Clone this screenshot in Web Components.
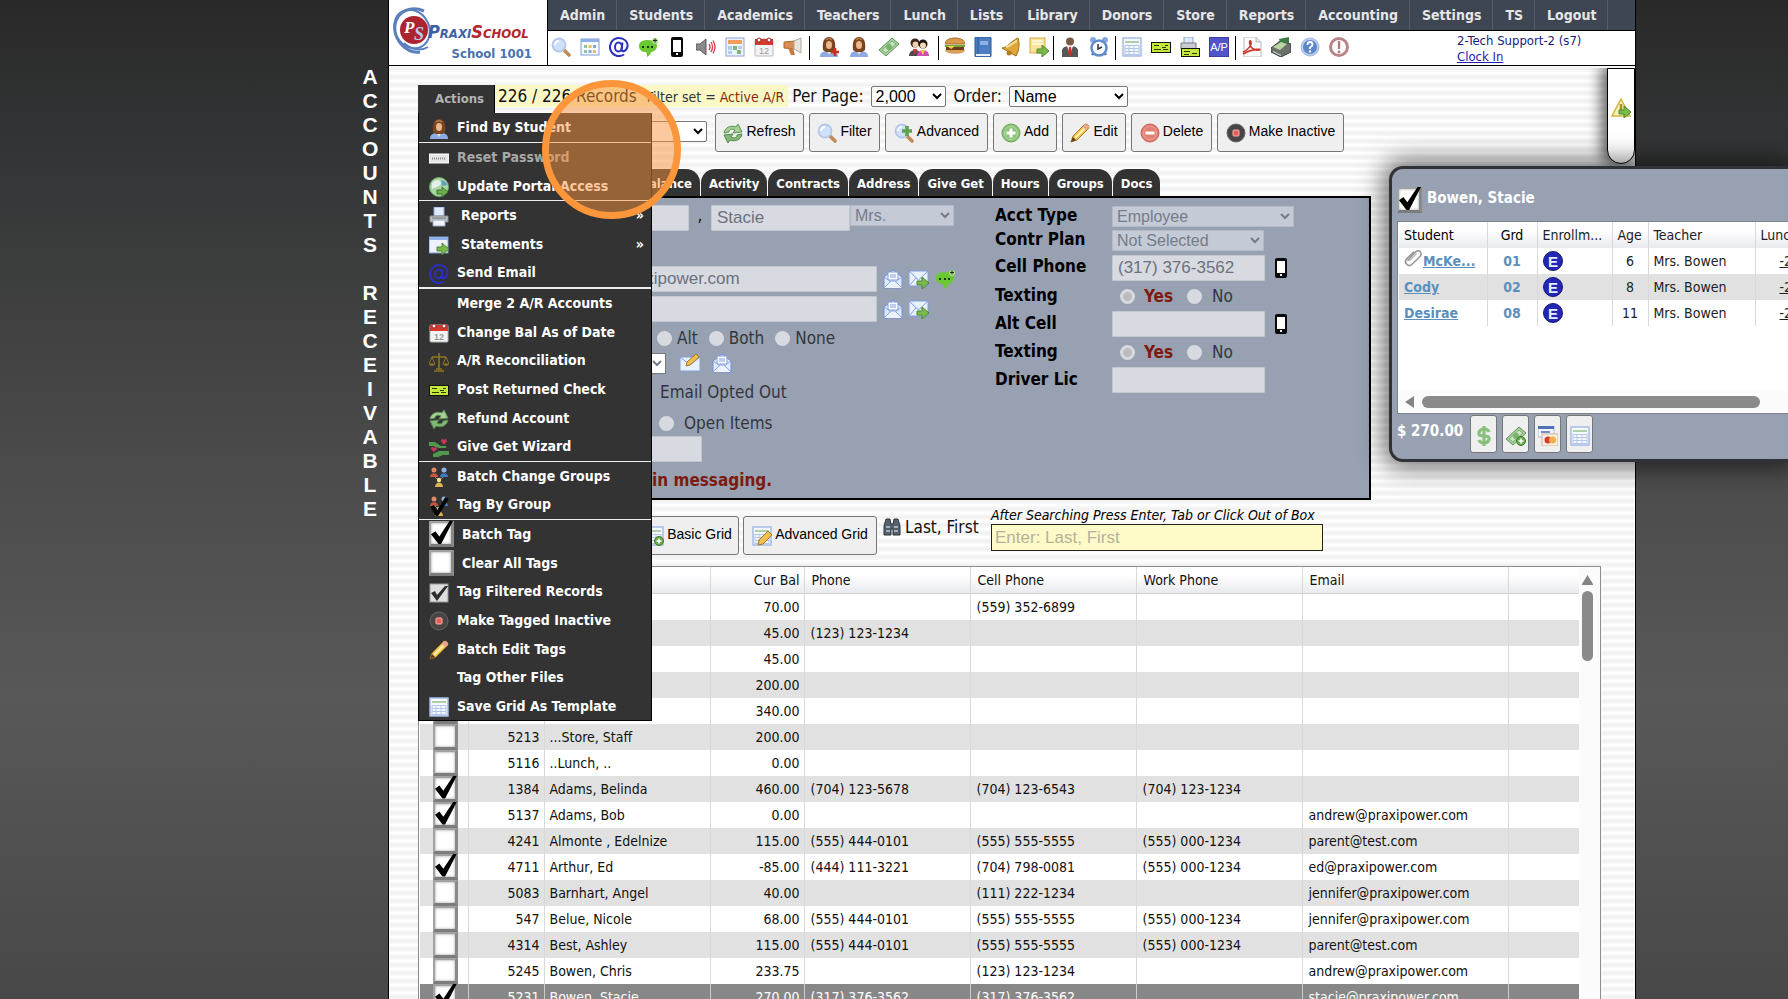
<!DOCTYPE html>
<html lang="en">
<head>
<meta charset="utf-8">
<title>PraxiSchool - Accounts Receivable</title>
<style>
  html, body { margin: 0; height: 100%; overflow: hidden; }
  body { font-family: "DejaVu Sans Condensed", "DejaVu Sans", sans-serif; font-size: 14px; color: #111; }
</style>
</head>
<body>
<praxi-app></praxi-app>
<script>
const PERSON = '<path d="M1 20c0-5 3-6 9-6s9 1 9 6z" fill="#8fabe4"/><path d="M7 13h6l-3 5z" fill="#f3dcc4"/><path d="M4 13C3 5 5 0 10 0s7 5 6 13l-3 2H7z" fill="#7a4421"/><path d="M7 3c2-2 4-2 6 0" stroke="#b47a4a" stroke-width="1.5" fill="none"/><ellipse cx="10" cy="8" rx="3" ry="4" fill="#e9b98d"/>';
const TABLE = '<rect x="1" y="1" width="18" height="18" fill="#f4f8ff" stroke="#a6bce6" stroke-width="1.500"/><path d="M3 5h14" stroke="#9cc08d" stroke-width="1.500"/><path d="M3 8.500h14M3 11.500h14M3 14.500h14M3 17.500h14M7 8v10M12 8v10M17 8v10M3 8v10" stroke="#b4c6e8" fill="none"/>';
const CHECKS = '<rect x="0" y="5" width="20" height="11" fill="#111"/><rect x="1" y="6" width="18" height="9" fill="#c3e83a"/><path d="M3 8.500h5M3 12.500h7M12 12.500h5M11 10.500h4M14 8.500h3" stroke="#2c3a00"/>';
const PENCIL = '<path d="M1 19l2-6L14 2q2-2 4 0t0 4L7 17z" fill="#f2c44d" stroke="#a87820"/><path d="M5 15L16 4" stroke="#fff0b0" stroke-width="2"/><path d="M1 19l2-5 3 3z" fill="#5a3a1a"/><path d="M14 2q2-2 4 0t0 4l-2 1-3-3z" fill="#e8a58f"/>';
const ARROW = '<path d="M8 12h5V8l7 6-7 6v-4H8z" fill="#7cb94c" stroke="#4b8a2a"/>';
const MAIL = '<path d="M1 8l9-7 9 7v11H1z" fill="#dfeafc" stroke="#6f8fd6"/><rect x="5" y="3" width="10" height="8" rx="1" fill="#fff" stroke="#7e9ade"/><path d="M7 6h6M7 8h6" stroke="#7e9ade"/><path d="M1 19l7-7h4l7 7M1 8l7 5M19 8l-7 5" stroke="#8aa6e2" fill="#eef4ff"/>';
const CASH = '<path d="M0 13L13 1l7 6L7 19z" fill="#a9cf9f" stroke="#5f9358"/><path d="M3 13L13 4l4 3L7 16z" fill="#c9e4c0" stroke="#7bb072"/><circle cx="10" cy="10" r="3" fill="#7ab36e"/>';
const RECYCLE = '<path d="M1 10C2 4 8 2 13 4l2-3 4 8-9 1 2-3C8 5 6 7 6 9z" fill="#a4d096" stroke="#5d9254"/><path d="M19 11c-1 6-7 8-12 6l-2 3-4-8 9-1-2 3c4 2 6 0 6-2z" fill="#82b976" stroke="#55884b"/>';
const MAG = '<path d="M13 13l5 5" stroke="#c08b55" stroke-width="3.600" stroke-linecap="round"/><circle cx="8" cy="8" r="6.500" fill="#cfe0f9" stroke="#b5c8ea" stroke-width="1.800"/><path d="M4 8a4 4 0 0 1 4-4" stroke="#fff" stroke-width="1.800" fill="none"/>';
const PHONE = '<rect x="4" y="0" width="12" height="20" rx="2" fill="#0a0a0a"/><rect x="6" y="3" width="8" height="12" fill="#fff"/><rect x="9" y="16" width="2" height="2" fill="#eee"/>';
const CAL = '<rect x="1" y="2" width="18" height="17" rx="1" fill="#f3f3f3" stroke="#b9b9b9"/><rect x="1" y="2" width="18" height="6" fill="#d33a2f"/><circle cx="5" cy="3" r="2" fill="#fff" stroke="#922"/><circle cx="15" cy="3" r="2" fill="#fff" stroke="#922"/><text x="10" y="17" font-size="9" text-anchor="middle" fill="#999" font-family="Liberation Sans, sans-serif">12</text>';
const CHAT = '<path d="M10 3c6 0 9 3 9 6s-3 6-6 6c0 2-2 4-4 5 0-2 0-3-1-5-4 0-7-2-7-6s3-6 9-6z" fill="#6cc832"/><path d="M4 10h2M9 10h2M13 10h2" stroke="#153c06" stroke-width="2.200"/><circle cx="17" cy="4" r="3" fill="#a8dd85"/><path d="M17 1.500v4M15 3.500h4" stroke="#222"/>';
const GROUP = '<circle cx="5" cy="3" r="2.500" fill="#e08a6c"/><path d="M1 10c0-5 8-5 8 0z" fill="#cb5540"/><circle cx="15" cy="3" r="2.500" fill="#8fb5e8"/><path d="M11 10c0-5 8-5 8 0z" fill="#3f7cc8"/><path d="M6 10l4 4 4-4" stroke="#888" fill="none"/><circle cx="10" cy="13" r="2.200" fill="#f3dc95"/><path d="M6 20c0-6 8-6 8 0z" fill="#dcb64d"/>';
const ICONS = {
  mag: MAG,
  windowgrid: '<rect x="1" y="2" width="18" height="16" fill="#f8fbff" stroke="#7f9bd4"/><rect x="1" y="2" width="18" height="3" fill="#8fb0e6"/><path d="M4 8h3v3H4zM4 13h3v3H4z" fill="#8fc3a0"/><path d="M8.500 8h3v3h-3zM13 13h3v3h-3z" fill="#e6c15a"/><path d="M13 8h3v3h-3zM8.500 13h3v3h-3z" fill="#7fa7dd"/>',
  at: '<path d="M13.500 5.500l-1 7c0 3 5 2 6-3 1-5-4-8.500-8.500-8.500a9 9 0 1 0 5 16.500" fill="none" stroke="#2a2fc0" stroke-width="2"/><ellipse cx="9.500" cy="10" rx="3.500" ry="4.500" fill="none" stroke="#2a2fc0" stroke-width="2"/>',
  chat: CHAT, phone: PHONE,
  speaker: '<path d="M0 7h4l6-5v16l-6-5H0z" fill="#8a8a8a" stroke="#5b5b5b"/><path d="M13 7q2 3 0 6M15 5q3 5 0 10M17 3.500q4 6.500 0 13" stroke="#d9474d" fill="none" stroke-width="1.400"/>',
  caltable: '<rect x="1" y="1" width="18" height="18" fill="#eef4fd" stroke="#8aa4d8"/><rect x="3" y="3" width="14" height="4" fill="#f0a05a"/><path d="M3 9h4v4H3zM3 14h4v3H3zM13 9h4v3h-4z" fill="#b5cbee"/><path d="M8 9h4v4H8zM12 13h4v4h-4z" fill="#7fb579"/>',
  datecal: CAL,
  horn: '<path d="M1 5l11-1v8L1 11z" fill="#d98d4e" stroke="#a8683a"/><path d="M11 4l7-3v15l-7-4z" fill="#e9e4de" stroke="#b0a89e"/><path d="M5 11h5l2 7H8z" fill="#c57a3e"/>',
  person: PERSON,
  personplus: PERSON + '<path d="M16 11v8M12 15h8" stroke="#d5281e" stroke-width="2.600"/>',
  cash: CASH,
  people: '<circle cx="6" cy="6" r="4.500" fill="#3b2418"/><circle cx="6.500" cy="7.500" r="3" fill="#f1cfae"/><path d="M0 19c0-8 12-8 12 0z" fill="#4b4b4f"/><path d="M4 12h4l-2 6z" fill="#d8322c"/><circle cx="14" cy="7" r="4.500" fill="#1e1512"/><circle cx="14" cy="8.500" r="3" fill="#f4d6b8"/><path d="M8 19c0-8 12-8 12 0z" fill="#d04fb5"/><path d="M11 13l3 5 2-5z" fill="#f2c744"/>',
  burger: '<path d="M0 7c0-8 20-8 20 0z" fill="#d99a4d" stroke="#a86a28"/><path d="M0 8h20v2H0z" fill="#6fa83a"/><path d="M1 10h18v3H1z" fill="#6f3d1c"/><path d="M2 9l4 3 4-3" fill="#f5d04c"/><path d="M0 13h20c0 5-20 5-20 0z" fill="#d9a05a"/>',
  book: '<rect x="2" y="0" width="16" height="20" rx="1" fill="#4d7ec4" stroke="#2d568f"/><path d="M5 0v20" stroke="#2d568f"/><path d="M3 18h14" stroke="#e8eefa" stroke-width="2"/><rect x="7" y="4" width="8" height="4" fill="#8eb1e4"/>',
  bell: '<path d="M17 1c2 6 1 13-2 18L1 11c5 0 9-7 16-10z" fill="#dfa63a" stroke="#9b6b18"/><path d="M5 10c5-1 7-5 11-6" stroke="#f8e2a0" stroke-width="2" fill="none"/><circle cx="8" cy="16" r="2.500" fill="#b17c22"/>',
  exportnote: '<rect x="1" y="1" width="15" height="15" fill="#fbe39b" stroke="#d9ab3e"/><path d="M3 4h11M3 7h11" stroke="#fff6d3" stroke-width="2"/>' + ARROW,
  suit: '<circle cx="10" cy="4.500" r="4" fill="#7b5a48"/><path d="M2 20V13q1-4 8-4t8 4v7z" fill="#575757"/><path d="M7 9l3 9 3-9z" fill="#fff"/><path d="M9 10h2l1 6-2 3-2-3z" fill="#d0302a"/>',
  clock: '<path d="M3 18l2-3M17 18l-2-3" stroke="#5b79ad" stroke-width="2.500"/><circle cx="4" cy="3" r="3" fill="#86a8dd"/><circle cx="16" cy="3" r="3" fill="#86a8dd"/><circle cx="10" cy="11" r="7.500" fill="#f7fbff" stroke="#5f8bd0" stroke-width="2.500"/><path d="M9 7v5l4-2" stroke="#333" fill="none" stroke-width="1.500"/>',
  table: TABLE, check: CHECKS,
  printcheck: '<path d="M4 0h9v7H4z" fill="#dfe8fa" stroke="#8b9fca"/><path d="M1 6h15v6H1z" fill="#c9ccd2" stroke="#777"/><rect x="1" y="11" width="19" height="9" fill="#111"/><rect x="2" y="12" width="17" height="7" fill="#c3e83a"/><path d="M4 14.500h6M4 17.500h5M12 16.500h5" stroke="#2c3a00"/>',
  ap: '<rect width="20" height="20" fill="#5154c6"/><rect x=".5" y=".5" width="19" height="19" fill="none" stroke="#3c3fa5"/><text x="10" y="14" font-size="11" text-anchor="middle" fill="#fff" font-family="Liberation Sans, sans-serif">A/P</text>',
  pdf: '<path d="M2 0h12l5 5v15H2z" fill="#fbfbfb" stroke="#bbb"/><path d="M14 0v5h5" fill="#e5e5e5" stroke="#bbb"/><path d="M1 15c5-2 9-7 8-10s-2 0-1 3 5 6 9 5-6-2-16 4" fill="none" stroke="#cf3a30" stroke-width="1.600"/>',
  register: '<path d="M0 11l9-7 11 3v8l-10 5-10-5z" fill="#6c716d" stroke="#3b3f3c"/><path d="M8 2l10-2v6l-8 1z" fill="#3d7d43"/><path d="M2 10l8-5 6 2-7 6z" fill="#b9d4a5"/><path d="M2 14l8 4v1l-8-4z" fill="#ddd"/>',
  help: '<circle cx="10" cy="10" r="9" fill="#b9cdec" stroke="#9db8e0"/><circle cx="10" cy="10" r="7" fill="#5d86c6"/><path d="M7.500 8q0-3 2.500-3t2.500 2.500Q12.500 9 10 10.500v1.500" stroke="#fff" fill="none" stroke-width="1.800"/><circle cx="10" cy="14.500" r="1.200" fill="#fff"/>',
  alert: '<circle cx="10" cy="10" r="8.500" fill="#fff" stroke="#b88589" stroke-width="3"/><path d="M10 4v8" stroke="#b07a7e" stroke-width="2.400"/><circle cx="10" cy="15" r="1.400" fill="#b07a7e"/>',
  keyboard: '<rect x="0" y="6" width="20" height="9" fill="#e6e6e6" stroke="#fff"/><path d="M3 10.500h14" stroke="#888" stroke-width="2" stroke-dasharray="1 1"/>',
  globe: '<circle cx="10" cy="10" r="9.500" fill="#a9d6a2" stroke="#6fa86b"/><path d="M3 6q5-5 8-2t-3 6-5 1z" fill="#e4f1e8"/><path d="M12 3q5 1 6 5l-5 1z" fill="#5d9fca"/><path d="M8 13h5v-3l6 5-6 5v-3H8z" fill="#6cae4b" stroke="#3e7a2b"/>',
  printer: '<path d="M5 0h10v9H5z" fill="#dfe9fb" stroke="#8ea6d8"/><path d="M1 9h18v6H1z" fill="#bcc0c6" stroke="#888"/><path d="M4 13h12v6H4z" fill="#f0f3fa" stroke="#9aa7c2"/><path d="M3 11h14" stroke="#777"/>',
  stmt: '<rect x="0" y="2" width="19" height="16" fill="#eef3fb" stroke="#7f9dd8"/><rect x="0" y="2" width="19" height="3" fill="#8db0e9"/>' + ARROW,
  scales: '<path d="M10 1v16M3 5h14M5 19h10M7 17h6" stroke="#8f7520" stroke-width="1.600"/><path d="M3 5L0 12h6zM17 5l-3 7h6z" fill="none" stroke="#8f7520"/><path d="M0 12h6q-3 4-6 0zM14 12h6q-3 4-6 0z" fill="#8f7520"/>',
  recycle: RECYCLE,
  hands: '<path d="M0 4h6l6 4h5v2h-7L4 8H0zM20 17h-6l-5 2H4v-3l6-3h10z" fill="#4f9a4a"/><path d="M15 7l-3-4q0-2 1.500-2T15 3q0-2 1.500-2T18 3zM5 14l-3-3q0-2 1.500-2T5 10.500Q5 9 6.500 9T8 11z" fill="#c9365c"/>',
  group: GROUP,
  taggroup: GROUP + '<path d="M3 10l5 8L18 2" fill="none" stroke="#050505" stroke-width="4"/>',
  greycheck: '<rect x="1" y="1" width="18" height="18" fill="#dedede" stroke="#999"/><path d="M2 10l4-2 2 4 8-9h3L8 18z" fill="#2c2c2c"/>',
  stop: '<circle cx="10" cy="10" r="9" fill="#4a4545" stroke="#666"/><rect x="7" y="7" width="6" height="6" rx="1" fill="#e2605a" stroke="#ffb1a6"/>',
  pencil: PENCIL,
  plus: '<circle cx="10" cy="10" r="9" fill="#8cc379" stroke="#69a55b"/><circle cx="10" cy="10" r="6.500" fill="none" stroke="#b2dba3"/><path d="M10 5.500v9M5.500 10h9" stroke="#fff" stroke-width="3"/>',
  minus: '<circle cx="10" cy="10" r="9" fill="#e08073" stroke="#c66054"/><circle cx="10" cy="10" r="6.500" fill="none" stroke="#f0a297"/><path d="M5.500 10h9" stroke="#fff" stroke-width="3"/>',
  magplus: MAG + '<path d="M13 3v10M8 8h10" stroke="#5fa252" stroke-width="3.600"/>',
  mailopen: MAIL,
  mailgo: '<rect x="0" y="2" width="19" height="15" fill="#eaf1fe" stroke="#7f9ddb"/><path d="M0 2l9.500 9L19 2M0 17l7-8M19 17l-7-8" fill="none" stroke="#7f9ddb"/>' + ARROW,
  mailedit: '<rect x="0" y="4" width="20" height="14" fill="#eaf1fe" stroke="#7f9ddb"/><path d="M0 4l10 8 10-8" fill="none" stroke="#7f9ddb"/><path d="M6 13l1-4 9-8 3 3-9 8z" fill="#f0c050" stroke="#a87820"/>',
  binoc: '<path d="M2 10l2-7h4l1 5h2l1-5h4l2 7v9h-7v-6H9v6H2z" fill="#56606b" stroke="#30363d"/><path d="M4 11h4M12 11h4M4 15h4M12 15h4" stroke="#9fb0c2" stroke-width="2"/>',
  gridadd: TABLE + '<circle cx="15" cy="15" r="4.500" fill="#67ab4e" stroke="#3f7d2d"/><path d="M15 12.500v5M12.500 15h5" stroke="#fff" stroke-width="1.500"/>',
  gridedit: TABLE + '<path d="M6 19l1-5 9-9 4 4-9 9z" fill="#f0c050" stroke="#a87820"/>',
  dollar: '<path d="M15 6q-1-3-5-3T5 6.500 10 10t5 3.500-5 3.500-5-3M10 0v20" fill="none" stroke="#8abf7c" stroke-width="3.200"/>',
  cashplus: CASH + '<circle cx="15" cy="15" r="4.500" fill="#67ab4e" stroke="#3f7d2d"/><path d="M15 12.500v5M12.500 15h5" stroke="#fff" stroke-width="1.500"/>',
  cards: '<rect x="0" y="0" width="16" height="11" fill="#f4f6fc" stroke="#a9b7d9"/><rect x="0" y="0" width="16" height="3" fill="#4f72b8"/><path d="M3 6h9" stroke="#6f8fd0" stroke-width="2"/><rect x="4" y="8" width="16" height="12" fill="#f7efe6" stroke="#d1b58f"/><circle cx="10" cy="14" r="3.500" fill="#d93a30"/><circle cx="14.500" cy="14" r="3.500" fill="#eeb04a"/>',
  clip: '<path d="M4 13L13 3q3-2 5 0t0 5l-9 9q-3 3-6 0t0-6l8-8" fill="none" stroke="#9a9a9a" stroke-width="1.800"/><path d="M6 13l8-8" stroke="#bbb" stroke-width="1.500"/>',
  enrolled: '<circle cx="10" cy="10" r="9.500" fill="#2327b8" stroke="#15186e"/><text x="10" y="15.500" font-size="15" font-weight="bold" text-anchor="middle" fill="#e8ecff" font-family="Liberation Sans, sans-serif">E</text>',
  warn: '<path d="M10 1l9 17H1z" fill="#f8f0b4" stroke="#d0b83e" stroke-width="1.600"/><path d="M10 6v6" stroke="#a8902a" stroke-width="2.500"/>' + ARROW
};

function define(name, css, html, setup) {
  const tpl = document.createElement('template');
  tpl.innerHTML = '<style>*{box-sizing:border-box}' + css + '</style>' + html;
  customElements.define(name, class extends HTMLElement {
    connectedCallback() {
      if (this.shadowRoot) return;
      this.attachShadow({ mode: 'open' }).append(tpl.content.cloneNode(true));
      if (setup) setup.call(this, this.shadowRoot);
    }
  });
}
const icon = (n) => `<ui-icon name="${n}"></ui-icon>`;

define('ui-icon', ':host{display:inline-block;flex:none;width:20px;height:20px}svg{display:block;width:100%;height:100%}',
  '<svg viewBox="0 0 20 20" aria-hidden="true"></svg>',
  function (r) { r.querySelector('svg').innerHTML = ICONS[this.getAttribute('name')] || ''; });

define('tag-box', `:host{display:inline-block;flex:none;width:25px;height:26px}
  input{appearance:none;display:block;margin:0;width:25px;height:26px;background:#fff;border:solid;border-width:2px 3px 3px 2px;border-color:#a2a2a2 #8a8a8a #7c7c7c #a2a2a2;box-shadow:inset 0 0 3px #999}
  input:checked::before{content:"";display:block;width:22px;height:24px;margin:-2px 0 0;background:#000;clip-path:polygon(0 55%,20% 42%,38% 64%,84% 0,100% 0,46% 96%,34% 96%)}`,
  '<input type="checkbox">',
  function (r) { const i = r.querySelector('input'); i.checked = this.hasAttribute('checked'); i.setAttribute('aria-label', this.getAttribute('label') || 'Tag'); });

define('tool-button', `:host{display:block;flex:none}
  button{display:flex;align-items:center;justify-content:center;gap:3px;width:100%;height:39px;padding:0 4px 4px;border:1px solid #767676;border-radius:3px;background:#efefef;color:#000;font:14px "Liberation Sans",Arial,sans-serif;white-space:nowrap}
  ui-icon{margin-top:4px}
  :host([square]) button{width:27px;height:38px;padding:0}`,
  '<button type="button"><slot></slot></button>',
  function (r) { const b = r.querySelector('button'); b.insertAdjacentHTML('afterbegin', icon(this.getAttribute('icon')));
    if (this.hasAttribute('label')) b.setAttribute('aria-label', this.getAttribute('label')); });

define('brand-logo', `:host{display:block;position:relative;width:159px;border-right:1px solid #000;background:#fff}
  svg{position:absolute;left:3px;top:7px;width:46px;height:48px}
  .name{position:absolute;left:39px;top:21px;white-space:nowrap;font-size:18px;line-height:22px;font-style:italic;font-weight:bold;font-variant:small-caps;color:#3f5fa8}
  .name b{color:#b3262c}
  .school{position:absolute;right:15px;top:46px;font-size:13px;line-height:16px;font-weight:bold;color:#4a71b0}`,
  `<svg viewBox="0 0 46 48" aria-hidden="true"><g fill="none" stroke="#5b80bd"><ellipse cx="20" cy="22" rx="17" ry="20" stroke-width="2" transform="rotate(-30 20 22)"/><path d="M32 4C20-1 5 3 3 18s12 29 25 27" stroke-width="3"/><path d="M36 40c-8 5-18 2-24-4" stroke-width="2"/></g><circle cx="22" cy="23" r="14" fill="#ab2430"/><g fill="#fff" font-family="Liberation Serif, serif" font-weight="bold" font-style="italic"><text x="12" y="26" font-size="17">P</text><text x="22" y="33" font-size="18" fill="#b9cbe8">S</text></g></svg>
   <div class="name">Praxi<b>School</b></div><div class="school">School 1001</div>`);

define('main-nav', `:host{display:flex;height:31px;background:#3e4654;border-bottom:1px solid #000}
  a{display:block;padding:0 11px 0 12px;border-right:1px solid #565d69;font-weight:bold;font-size:14px;line-height:30px;color:#e6e6e6;text-decoration:none;white-space:nowrap}`,
  '', function (r) { r.append(...['Admin', 'Students', 'Academics', 'Teachers', 'Lunch', 'Lists', 'Library', 'Donors', 'Store', 'Reports', 'Accounting', 'Settings', 'TS', 'Logout'].map(t => Object.assign(document.createElement('a'), { href: '#', textContent: t }))); });

define('icon-strip', `:host{display:flex;height:34px;padding:5px 0 0;background:#fff}
  .set{display:flex;gap:9px;padding:0 6px;height:24px;border-right:1px solid #000}
  .set:first-of-type{padding-left:3px}
  .set.wide{gap:10px;padding:0 9px}
  .set.tight{gap:8px;padding:0 4px 0 6px}
  .set:last-of-type{border:0}
  a{display:block;height:20px;padding-top:1px}
  .user{margin-left:auto;width:178px;margin-top:-3px;font-size:13px;line-height:16px;color:#1a1a78}
  .user a{height:16px;padding:0;color:#1c1cb0}`,
  '', function (r) {
    const sets = [['', 'mag windowgrid at chat phone speaker caltable datecal horn'], ['wide', 'personplus person cash people'], ['tight', 'burger book bell exportnote'], ['', 'suit clock'], ['', 'table check printcheck ap'], ['', 'pdf register help alert']];
    r.innerHTML += sets.map(([c, s]) => `<section class="set ${c}">` + s.split(' ').map(n => `<a href="#" aria-label="${n}">${icon(n)}</a>`).join('') + '</section>').join('') +
      '<div class="user">2-Tech Support-2 (s7)<a href="#">Clock In</a></div>';
  });

define('actions-menu', `:host{display:block;position:relative;width:77px;height:28px;z-index:3;font-size:14px;line-height:18px}
  .tab{display:block;width:100%;height:28px;padding:0 10px 0 0;border:0;border-right:1px solid #000;background:#333;color:#b4b4b4;font:bold 13px/28px "DejaVu Sans Condensed","DejaVu Sans",sans-serif;text-align:right}
  ul{position:absolute;left:0;top:100%;display:flex;flex-direction:column;width:234px;height:608px;margin:0;padding:0;list-style:none;background:#333;border:1px solid #000;border-top:0}
  li{flex:1;display:flex;align-items:center}
  li.line{border-bottom:1px solid #eee}
  li.thick{border-bottom:2px solid #eee}
  a{display:flex;align-items:center;gap:8px;width:100%;padding:0 7px 0 10px;color:#fff;font-weight:bold;text-decoration:none;white-space:nowrap}
  a ui-icon{margin-top:3px}
  .off a{color:#a8a8a8}
  .sub span{padding-left:4px}
  .sub a::after{content:"»";margin-left:auto}
  .blank{width:20px;flex:none}`,
  '<button class="tab" type="button">Actions</button><ul></ul>', function (r) {
    const items = [['person', 'Find By Student', 'line'], ['keyboard', 'Reset Password', 'off'], ['globe', 'Update Portal Access', 'line'], ['printer', 'Reports', 'sub'], ['stmt', 'Statements', 'sub'], ['at', 'Send Email', 'thick'], ['', 'Merge 2 A/R Accounts', ''], ['datecal', 'Change Bal As of Date', ''], ['scales', 'A/R Reconciliation', ''], ['check', 'Post Returned Check', ''], ['recycle', 'Refund Account', ''], ['hands', 'Give Get Wizard', 'line'], ['group', 'Batch Change Groups', ''], ['taggroup', 'Tag By Group', 'line'], ['box1', 'Batch Tag', ''], ['box0', 'Clear All Tags', ''], ['greycheck', 'Tag Filtered Records', ''], ['stop', 'Make Tagged Inactive', ''], ['pencil', 'Batch Edit Tags', ''], ['', 'Tag Other Files', ''], ['table', 'Save Grid As Template', '']];
    r.querySelector('ul').innerHTML = items.map(([i, t, c]) => `<li class="${c}"><a href="#">${!i ? '<i class="blank"></i>' : i === 'box1' ? '<tag-box checked></tag-box>' : i === 'box0' ? '<tag-box></tag-box>' : icon(i)}<span>${t}</span></a></li>`).join('');
  });

const SELECT = `select{height:21px;padding:0;border:1px solid #767676;border-radius:2px;background:#fff;color:#000;font:16px "Liberation Sans",Arial,sans-serif}`;

define('record-bar', `:host{display:flex;font-size:17px;line-height:22px;height:28px;white-space:nowrap}
  .count{display:flex;gap:10px;height:22px;padding:0 4px 0 3px;background:#fbf8c6}
  .count small{font-size:14px;line-height:24px;color:#2c3340}
  .count b{font-weight:normal;color:#8a2a0c}
  label{display:flex;gap:7px;margin-left:4px}
  label+label{margin-left:8px}
  ${SELECT} select{margin-top:1px} .pp{width:75px}.ord{width:119px}`,
  `<actions-menu></actions-menu><div class="count"><span>226 / 226 Records</span><small>Filter set = <b>Active A/R</b></small></div>
   <label>Per Page: <select class="pp"><option>2,000</option></select></label><label>Order: <select class="ord"><option>Name</option></select></label>`);

define('record-tools', `:host{display:flex;gap:5px;padding-left:134px;height:39px}
  ${SELECT} select{width:155px;margin:8px 3px 0 0}
  .w88{width:89px}.w71{width:71px}.w102{width:103px}.w64{width:64px}.w81{width:81px}.w127{width:127px}`,
  `<select aria-label="Account"><option></option></select>
   <tool-button class="w88" icon="recycle">Refresh</tool-button><tool-button class="w71" icon="mag">Filter</tool-button><tool-button class="w102" icon="magplus">Advanced</tool-button><tool-button class="w64" icon="plus">Add</tool-button><tool-button class="w64" icon="pencil">Edit</tool-button><tool-button class="w81" icon="minus">Delete</tool-button><tool-button class="w127" icon="stop">Make Inactive</tool-button>`);

define('account-tabs', `:host{display:flex;gap:1px;margin-top:17px;padding-left:214px}
  a{padding:0 8px;height:27px;border-radius:14px 14px 0 0;background:#333;color:#fff;font-weight:bold;font-size:13px;line-height:29px;text-decoration:none;white-space:nowrap}`,
  ['Balance', 'Activity', 'Contracts', 'Address', 'Give Get', 'Hours', 'Groups', 'Docs'].map(t => `<a href="#">${t}</a>`).join(''));

define('account-form', `:host{display:flex;height:304px;margin-right:264px;padding:6px 0 0 134px;border:solid #000;border-width:2px 2px 2px 1px;background:#98a1b2;font-size:17px;color:#33363c}
  .row{display:flex;align-items:center;white-space:nowrap}
  .left{width:442px}
  .h22{height:22px}.h26{height:26px}.h28{height:28px}.h30{height:30px}.h36{height:36px}
  .skip{margin-bottom:30px;align-items:flex-start;padding-top:1px}
  input:not([type]){height:26px;padding:0 5px;border:1px solid #c3c8d0;background:#d7dae0;color:#6b7180;font:17px "Liberation Sans",Arial,sans-serif;border-radius:1px}
  select{height:21px;padding:0;border:1px solid #b4bac6;background:#c4cad6;color:#767c88;font:16px "Liberation Sans",Arial,sans-serif;opacity:1}
  .title{width:104px}
  select.live{background:#fff;border-color:#767676;width:113px;margin-right:8px}
  input[type=radio]{appearance:none;flex:none;width:15px;height:15px;margin:0;border-radius:50%;background:#d7dae0}
  input[type=radio]:checked{background:#bcbcbc;border:3px solid #d7dae0}
  label{display:flex;align-items:center}
  .last{width:136px}.first{width:139px}.mail{width:324px}.comma{width:22px;text-align:center;color:#111}
  .row ui-icon{margin-left:6px}
  .row select+ui-icon+ui-icon{margin-left:12px}
  .send{padding-left:104px}.send label{gap:5px;margin-right:11px}
  .opt{padding-left:107px}.open{padding-left:106px}.open label{gap:10px}
  .amount{width:149px}
  .note,.yes{font-weight:bold;color:#7c1a10}
  .note{padding-left:99px}
  dl{display:grid;grid-template-columns:117px auto;grid-template-rows:24px 24px 31px 26px 30px 26px 30px;align-content:start;margin:0;align-items:center}
  dt{padding-bottom:3px;font-weight:bold;color:#000}dd{display:flex;align-items:center;margin:0}
  dd input:not([type]){width:153px}
  dd ui-icon{margin-left:6px}
  dd label:first-child{padding-left:8px;width:75px;gap:9px}dd label+label{gap:10px}
  .acct{width:182px}.plan{width:152px}`,
  `<div class="left">
    <div class="row h30 skip"><input class="last" aria-label="Last name" disabled><span class="comma">,</span><input class="first" aria-label="First name" value="Stacie" disabled><select class="title" aria-label="Title" disabled><option>Mrs.</option></select></div>
    <div class="row h30"><input class="mail" aria-label="Email" value="stacie@praxipower.com" disabled><ui-icon name="mailopen"></ui-icon><ui-icon name="mailgo"></ui-icon><ui-icon name="chat"></ui-icon></div>
    <div class="row h30"><input class="mail" aria-label="Alternate email" disabled><ui-icon name="mailopen"></ui-icon><ui-icon name="mailgo"></ui-icon></div>
    <div class="row h28 send"><label><input type="radio" name="send" disabled>Alt</label><label><input type="radio" name="send" disabled>Both</label><label><input type="radio" name="send" disabled>None</label></div>
    <div class="row h22"><select class="live" aria-label="Template"><option></option></select><ui-icon name="mailedit"></ui-icon><ui-icon name="mailopen"></ui-icon></div>
    <div class="row h36 opt">Email Opted Out</div>
    <div class="row h26 open"><label><input type="radio" name="bill" disabled>Open Items</label></div>
    <div class="row h26"><input class="amount" aria-label="Amount" disabled></div>
    <div class="row h36 note">in messaging.</div>
  </div>
  <dl>
    <dt>Acct Type</dt><dd><select class="acct" aria-label="Acct Type" disabled><option>Employee</option></select></dd>
    <dt>Contr Plan</dt><dd><select class="plan" aria-label="Contr Plan" disabled><option>Not Selected</option></select></dd>
    <dt>Cell Phone</dt><dd><input aria-label="Cell Phone" value="(317) 376-3562" disabled><ui-icon name="phone"></ui-icon></dd>
    <dt>Texting</dt><dd><label class="yes"><input type="radio" name="t1" checked disabled>Yes</label><label><input type="radio" name="t1" disabled>No</label></dd>
    <dt>Alt Cell</dt><dd><input aria-label="Alt Cell" disabled><ui-icon name="phone"></ui-icon></dd>
    <dt>Texting</dt><dd><label class="yes"><input type="radio" name="t2" checked disabled>Yes</label><label><input type="radio" name="t2" disabled>No</label></dd>
    <dt>Driver Lic</dt><dd><input aria-label="Driver Lic" disabled></dd>
  </dl>`);

define('grid-tools', `:host{display:flex;align-items:flex-start;height:66px;padding:6px 0 0 219px}
  tool-button{margin:10px 4px 0 0}
  .basic{width:102px}.adv{width:134px}
  .by{display:flex;gap:3px;width:95px;margin:10px 14px 0 1px;font-size:17px;line-height:22px;white-space:nowrap}
  .find{font-size:14px;font-style:italic;line-height:18px;color:#000;white-space:nowrap}
  input{display:block;width:332px;height:27px;padding:0 3px;border:1px solid #222;background:#fdfac8;font:17px "Liberation Sans",Arial,sans-serif}
  input::placeholder{color:#b5b29a}`,
  `<tool-button class="basic" icon="gridadd">Basic Grid</tool-button><tool-button class="adv" icon="gridedit">Advanced Grid</tool-button>
   <div class="by"><ui-icon name="binoc"></ui-icon>Last, First</div>
   <label class="find">After Searching Press Enter, Tab or Click Out of Box<input placeholder="Enter: Last, First"></label>`);

define('record-grid', `:host{display:flex;flex:1;min-height:0;margin-right:34px;overflow:hidden;border:1px solid #8a8c90;border-bottom:0;background:#fff}
  .view{flex:1;min-width:0;overflow:hidden;padding-left:1px}
  table{width:100%;border-collapse:collapse;table-layout:fixed;font-size:14px}
  th,td{height:26px;padding:0 4px 0 6px;border-right:1px solid #d9d9d9;text-align:left;font-weight:normal;white-space:nowrap;line-height:16px}
  th{padding-left:7px;background:linear-gradient(#fff 30%,#e9eaee);border-bottom:1px solid #d0d0d0}
  td{color:#111}
  tr>:last-child{border-right:0}
  tbody tr:nth-child(even) td{background:#e1e1e1}
  tbody tr.on td{background:#878787;color:#fff;border-color:#ccc}
  .n{text-align:right}
  td:nth-child(3){padding-left:5px}
  td.t{padding:0 0 0 13px}
  tag-box{display:block}
  .bar{width:21px;background:#fbfbfb;padding:8px 0 0 3px}
  .bar i{display:block;width:11px;height:10px;background:#858585;clip-path:polygon(50% 0,100% 90%,100% 100%,0 100%,0 90%)}
  .bar b{display:block;width:11px;height:70px;margin-top:6px;border-radius:6px;background:#8a8a8a}`,
  `<div class="view"><table><colgroup><col style="width:48px"><col style="width:76px"><col style="width:166px"><col style="width:94px"><col style="width:166px"><col style="width:166px"><col style="width:166px"><col style="width:206px"><col></colgroup>
   <thead><tr><th></th><th></th><th></th><th class="n">Cur Bal</th><th>Phone</th><th>Cell Phone</th><th>Work Phone</th><th>Email</th><th></th></tr></thead><tbody></tbody></table></div><div class="bar"><i></i><b></b></div>`,
  function (r) {
    const rows = ['|||70.00||(559) 352-6899||', '|||45.00|(123) 123-1234|||', '|||45.00||||', '|||200.00||||', '|||340.00||||', '|5213|...Store, Staff|200.00||||', '|5116|..Lunch, ..|0.00||||', 'x|1384|Adams, Belinda|460.00|(704) 123-5678|(704) 123-6543|(704) 123-1234|', 'x|5137|Adams, Bob|0.00||||andrew@praxipower.com', '|4241|Almonte , Edelnize|115.00|(555) 444-0101|(555) 555-5555|(555) 000-1234|parent@test.com', 'x|4711|Arthur, Ed|-85.00|(444) 111-3221|(704) 798-0081|(555) 000-1234|ed@praxipower.com', '|5083|Barnhart, Angel|40.00||(111) 222-1234||jennifer@praxipower.com', '|547|Belue, Nicole|68.00|(555) 444-0101|(555) 555-5555|(555) 000-1234|jennifer@praxipower.com', '|4314|Best, Ashley|115.00|(555) 444-0101|(555) 555-5555|(555) 000-1234|parent@test.com', '|5245|Bowen, Chris|233.75||(123) 123-1234||andrew@praxipower.com', 'x|5231|Bowen, Stacie|270.00|(317) 376-3562|(317) 376-3562||stacie@praxipower.com'];
    r.querySelector('tbody').innerHTML = rows.map((s, k) => { const [x, ...c] = s.split('|');
      return `<tr class="${k === 15 ? 'on' : ''}"><td class="t"><tag-box ${x ? 'checked' : ''} label="Tag ${c[1]}"></tag-box></td>` + c.map((v, j) => `<td class="${j === 0 || j === 2 ? 'n' : ''}">${v}</td>`).join('') + '<td></td></tr>'; }).join('');
  });

define('student-card', `:host{display:block;position:absolute;right:0;top:166px;width:399px;height:296px;z-index:4;overflow:hidden;padding:0 0 0 5px;border:3px solid #2f3236;border-right:0;border-radius:14px 0 0 14px;background:#98a1b2;box-shadow:0 0 24px 6px rgba(0,0,0,.55)}
  header{display:flex;align-items:center;gap:5px;height:52px;padding-top:10px;color:#fff;font-weight:bold;font-size:15px}
  header span{padding-bottom:4px}
  .grid{height:193px;border:1px solid #7b8290;border-right:0;background:#fff;overflow:hidden;padding-left:1px;display:flex;flex-direction:column}
  table{width:430px;border-collapse:collapse;table-layout:fixed;font-size:14px;line-height:16px}
  th,td{height:26px;padding:0 5px;border-right:1px solid #d9d9d9;font-weight:normal;text-align:left;white-space:nowrap;overflow:hidden;color:#222}
  th{background:linear-gradient(#fff 30%,#e9eaee)}
  th:first-child,th:nth-child(2){color:#000}
  tbody tr:nth-child(even) td{background:#e1e1e1}
  td a{color:#5b8fbe;font-weight:bold}
  td ui-icon{display:inline-block;vertical-align:middle}
  td:first-child ui-icon{width:18px;height:18px;margin:-8px 1px 0 0}
  .c{text-align:center}td.g{text-align:center;color:#5b8fbe;font-weight:bold}
  td.l a{color:#222;font-weight:normal}td.l{padding-left:24px}
  .bar{display:flex;align-items:center;gap:8px;margin-top:auto;height:22px;padding-left:6px;background:#fbfbfb}
  .bar i{width:9px;height:12px;background:#858585;clip-path:polygon(0 50%,100% 0,100% 100%)}
  .bar b{width:338px;height:12px;border-radius:6px;background:#8a8a8a}
  footer{display:flex;gap:5px;padding-top:1px}
  footer strong{width:68px;color:#fff;font-size:15px;line-height:32px}`,
  `<header><tag-box checked label="Tag Bowen, Stacie"></tag-box><span>Bowen, Stacie</span></header>
   <div class="grid"><table><colgroup><col style="width:88px"><col style="width:50px"><col style="width:75px"><col style="width:36px"><col style="width:107px"><col></colgroup>
   <thead><tr><th>Student</th><th class="c">Grd</th><th>Enrollm...</th><th>Age</th><th>Teacher</th><th>Lunch</th></tr></thead>
   <tbody><tr><td><ui-icon name="clip"></ui-icon><a href="#">McKe...</a></td><td class="g">01</td><td><ui-icon name="enrolled"></ui-icon></td><td class="c">6</td><td>Mrs. Bowen</td><td class="l"><a href="#">-20.00</a></td></tr>
   <tr><td><a href="#">Cody</a></td><td class="g">02</td><td><ui-icon name="enrolled"></ui-icon></td><td class="c">8</td><td>Mrs. Bowen</td><td class="l"><a href="#">-20.00</a></td></tr>
   <tr><td><a href="#">Desirae</a></td><td class="g">08</td><td><ui-icon name="enrolled"></ui-icon></td><td class="c">11</td><td>Mrs. Bowen</td><td class="l"><a href="#">-20.00</a></td></tr></tbody></table>
   <div class="bar"><i></i><b></b></div></div>
   <footer><strong>$ 270.00</strong><tool-button square icon="dollar" label="Charge"></tool-button><tool-button square icon="cashplus" label="Payment"></tool-button><tool-button square icon="cards" label="Card"></tool-button><tool-button square icon="table" label="Ledger"></tool-button></footer>`);

define('click-marker', ':host{position:absolute;left:153px;top:14px;z-index:5;width:139px;height:139px;border:7px solid #fb963a;border-radius:50%;background:rgba(250,145,60,.5);box-sizing:border-box;pointer-events:none}', '');

define('praxi-app', `:host{display:grid;grid-template-columns:388fr 1248fr 152fr;position:relative;height:100vh;overflow:hidden;background:linear-gradient(#292929,#323334 13%,#4c4c4c 48%,#585858 70%,#484848)}
  h1{justify-self:end;width:16px;margin:65px 10px 0 0;font:bold 21px/24px "Liberation Sans",Arial,sans-serif;color:#fff;white-space:break-spaces;word-break:break-all;line-break:anywhere;text-align:center}
  .page{display:flex;flex-direction:column;min-width:0;min-height:0;border:solid #000;border-width:0 1px;background:repeating-linear-gradient(#fff 0 2px,#f7f7f7 2px 4px,#f1f1f1 4px 6px,#f7f7f7 6px 8px)}
  .top{display:flex;flex:none;height:66px;border-bottom:1px solid #000;background:#fff}
  .top>div{flex:1;min-width:0}
  main{position:relative;display:flex;flex-direction:column;flex:1;min-height:0;padding:19px 0 0 29px}
  .alert{position:absolute;right:0;top:2px;width:28px;height:96px;padding:29px 3px;border:1px solid #000;border-radius:0 0 14px 14px;background:#fff;box-shadow:-4px 0 14px 2px rgba(0,0,0,.6);clip-path:inset(0 0 -20px -40px)}
  record-bar,record-tools,account-tabs,account-form,grid-tools{flex:none}`,
  `<h1>ACCOUNTS RECEIVABLE</h1>
   <div class="page"><div class="top"><brand-logo></brand-logo><div><main-nav></main-nav><icon-strip></icon-strip></div></div>
   <main><record-bar></record-bar><record-tools></record-tools><account-tabs></account-tabs><account-form></account-form><grid-tools></grid-tools><record-grid></record-grid>
   <a class="alert" href="#" aria-label="Alerts"><ui-icon name="warn"></ui-icon></a><click-marker></click-marker></main></div>
   <student-card></student-card>`);
</script>
</body>
</html>
